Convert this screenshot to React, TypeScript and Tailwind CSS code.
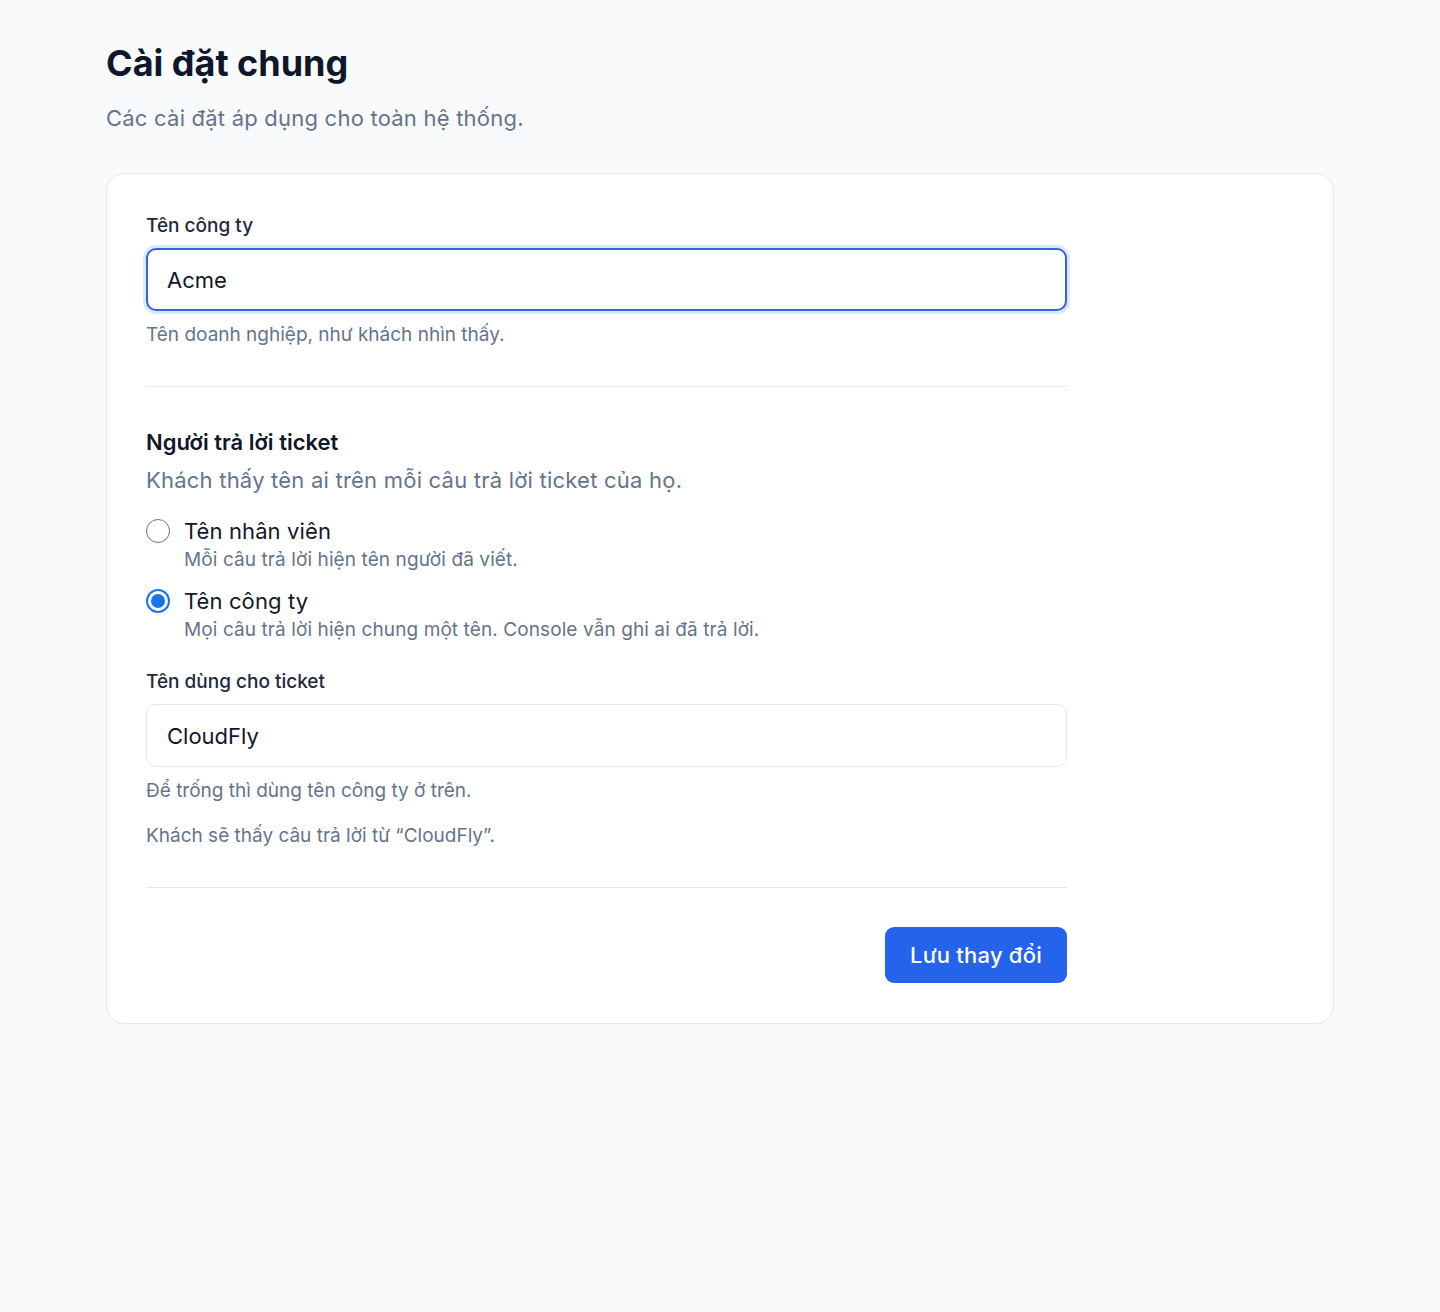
import { useState } from 'react'

const font = { fontFamily: 'Inter, "Noto Sans", sans-serif' }

function Radio({
  checked,
  label,
  hint,
  onSelect,
  className = '',
}: {
  checked: boolean
  label: string
  hint: string
  onSelect: () => void
  className?: string
}) {
  return (
    <label className={`flex cursor-pointer items-start gap-[14px] ${className}`} onClick={onSelect}>
      <span className="mt-[3px] flex h-6 w-6 shrink-0 items-center justify-center">
        {checked ? (
          <span className="flex h-6 w-6 items-center justify-center rounded-full border-2 border-[#1a73e8] bg-white">
            <span className="h-[14px] w-[14px] rounded-full bg-[#1a73e8]" />
          </span>
        ) : (
          <span className="h-6 w-6 rounded-full border-[1.5px] border-[#6b7280] bg-white" />
        )}
      </span>
      <span className="flex flex-col">
        <span className="text-[22px] leading-[30px] tracking-[0.005em] text-[#111827]">{label}</span>
        <span className="mt-[2px] text-[19px] leading-[24px] tracking-[0.005em] text-[#64748b]">{hint}</span>
      </span>
    </label>
  )
}

export default function App() {
  const [company, setCompany] = useState('Acme')
  const [ticketName, setTicketName] = useState('CloudFly')
  const [mode, setMode] = useState<'staff' | 'company'>('company')

  return (
    <div className="min-h-screen bg-[#f8fafc] px-[106px] pt-[41px] pb-20" style={font}>
      <h1 className="text-[36px] leading-[44px] font-bold text-[#0f172a]">Cài đặt chung</h1>
      <p className="mt-[17px] text-[22px] leading-[32px] tracking-[0.01em] text-[#64748b]">
        Các cài đặt áp dụng cho toàn hệ thống.
      </p>

      <div className="mt-[39px] rounded-[18px] border border-[#e5e7eb] bg-white px-[39px] pt-[41px] pb-[40px]">
        <div className="max-w-[921px]">
          <label className="block text-[19px] leading-[22px] font-medium text-[#1e293b]">Tên công ty</label>
          <input
            value={company}
            onChange={(e) => setCompany(e.target.value)}
            className="mt-[11px] block h-[63px] w-full rounded-[10px] border-2 border-[#3563d9] bg-white px-[19px] text-[22px] text-[#0f172a] shadow-[0_0_0_3px_rgba(59,130,246,0.18)] outline-none"
          />
          <p className="mt-3 text-[19px] leading-[24px] text-[#64748b]">Tên doanh nghiệp, như khách nhìn thấy.</p>

          <div className="mt-[39px] h-px bg-[#e2e8f0]" />

          <h2 className="mt-[41px] text-[22px] leading-[28px] font-semibold text-[#0f172a]">Người trả lời ticket</h2>
          <p className="mt-2 text-[22px] leading-[32px] tracking-[0.01em] text-[#64748b]">
            Khách thấy tên ai trên mỗi câu trả lời ticket của họ.
          </p>

          <Radio
            className="mt-5"
            checked={mode === 'staff'}
            onSelect={() => setMode('staff')}
            label="Tên nhân viên"
            hint="Mỗi câu trả lời hiện tên người đã viết."
          />
          <Radio
            className="mt-[14px]"
            checked={mode === 'company'}
            onSelect={() => setMode('company')}
            label="Tên công ty"
            hint="Mọi câu trả lời hiện chung một tên. Console vẫn ghi ai đã trả lời."
          />

          <label className="mt-[29px] block text-[19px] leading-[22px] font-medium text-[#1e293b]">
            Tên dùng cho ticket
          </label>
          <input
            value={ticketName}
            onChange={(e) => setTicketName(e.target.value)}
            className="mt-[11px] block h-[63px] w-full rounded-[10px] border border-[#e2e8f0] bg-white px-5 text-[22px] text-[#0f172a] outline-none"
          />
          <p className="mt-3 text-[19px] leading-[24px] text-[#64748b]">Để trống thì dùng tên công ty ở trên.</p>
          <p className="mt-[21px] text-[19px] leading-[24px] text-[#64748b]">
            Khách sẽ thấy câu trả lời từ “{ticketName || company}”.
          </p>

          <div className="mt-[39px] h-px bg-[#e2e8f0]" />

          <div className="mt-[39px] flex justify-end">
            <button className="h-14 w-[182px] rounded-[9px] bg-[#2563eb] text-[22px] font-medium tracking-[0.01em] text-white">
              Lưu thay đổi
            </button>
          </div>
        </div>
      </div>
    </div>
  )
}
